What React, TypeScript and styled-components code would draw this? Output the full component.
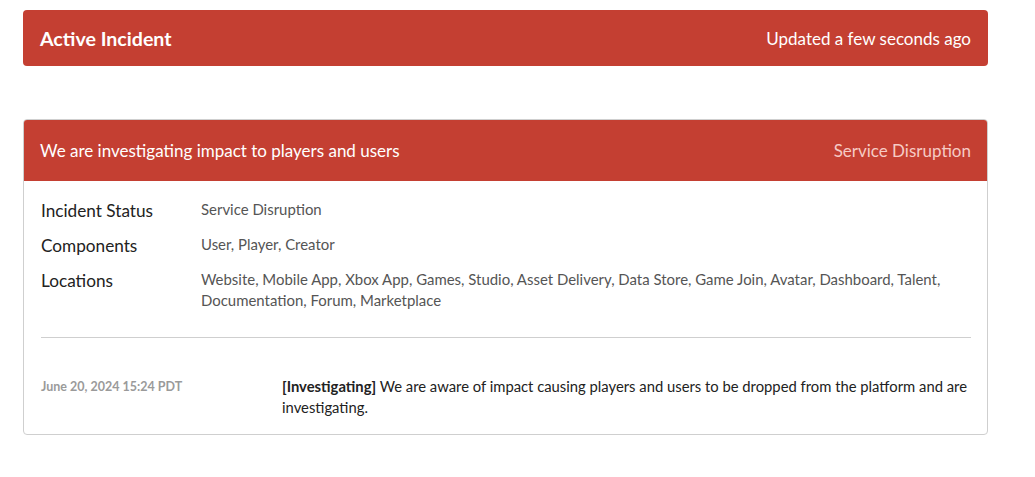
import { Fragment } from 'react';
import styled, { createGlobalStyle } from 'styled-components';

const GlobalStyle = createGlobalStyle`
  body {
    margin: 0;
    background: #ffffff;
    font-family: Lato, "Open Sans", Arial, sans-serif;
  }
`;

const Page = styled.div`
  padding: 10px 47px 0 23px;
`;

const Banner = styled.div`
  background-color: #c43f32;
  border-radius: 4px;
  height: 56px;
  padding: 0 17px;
  display: flex;
  justify-content: space-between;
  align-items: center;
  color: #ffffff;
`;

const BannerTitle = styled.h1`
  margin: 0;
  font-size: 19.6px;
  font-weight: 700;
`;

const BannerNote = styled.span`
  font-size: 17px;
`;

const Card = styled.section`
  margin-top: 53px;
  border: 1px solid #cfcfcf;
  border-radius: 4px;
  overflow: hidden;
`;

const CardHeader = styled.div`
  background-color: #c43f32;
  height: 61px;
  padding: 0 16px;
  display: flex;
  justify-content: space-between;
  align-items: center;
`;

const CardTitle = styled.h2`
  margin: 0;
  font-size: 17px;
  font-weight: 400;
  color: #ffffff;
`;

const CardStatus = styled.span`
  font-size: 17px;
  color: #f6cbc5;
`;

const CardBody = styled.div`
  padding: 18px 16px 16px 17px;
`;

const Details = styled.div`
  display: grid;
  grid-template-columns: 160px 1fr;
  row-gap: 11px;
`;

const Label = styled.div`
  font-size: 17.2px;
  line-height: 24px;
  color: #222;
`;

const Value = styled.div`
  font-size: 14.95px;
  line-height: 21px;
  color: #555;
`;

const Divider = styled.hr`
  border: none;
  border-top: 1px solid #cfcfcf;
  margin: 26px 0 38px;
`;

const Update = styled.div`
  display: grid;
  grid-template-columns: 241px 1fr;
  align-items: start;
`;

const UpdateDate = styled.div`
  font-size: 12.5px;
  font-weight: 700;
  line-height: 21px;
  color: #9a9a9a;
`;

const UpdateText = styled.p`
  margin: 0;
  font-size: 14.8px;
  line-height: 21px;
  color: #222;

  strong {
    font-weight: 700;
  }
`;

const details: [string, string][] = [
  ['Incident Status', 'Service Disruption'],
  ['Components', 'User, Player, Creator'],
  [
    'Locations',
    'Website, Mobile App, Xbox App, Games, Studio, Asset Delivery, Data Store, Game Join, Avatar, Dashboard, Talent, Documentation, Forum, Marketplace',
  ],
];

const App = () => {
  return (
    <Page>
      <GlobalStyle />
      <Banner>
        <BannerTitle>Active Incident</BannerTitle>
        <BannerNote>Updated a few seconds ago</BannerNote>
      </Banner>
      <Card>
        <CardHeader>
          <CardTitle>We are investigating impact to players and users</CardTitle>
          <CardStatus>Service Disruption</CardStatus>
        </CardHeader>
        <CardBody>
          <Details>
            {details.map(([label, value]) => (
              <Fragment key={label}>
                <Label>{label}</Label>
                <Value>{value}</Value>
              </Fragment>
            ))}
          </Details>
          <Divider />
          <Update>
            <UpdateDate>June 20, 2024 15:24 PDT</UpdateDate>
            <UpdateText>
              <strong>[Investigating]</strong> We are aware of impact causing players and users to be
              dropped from the platform and are investigating.
            </UpdateText>
          </Update>
        </CardBody>
      </Card>
    </Page>
  );
};

export default App;
